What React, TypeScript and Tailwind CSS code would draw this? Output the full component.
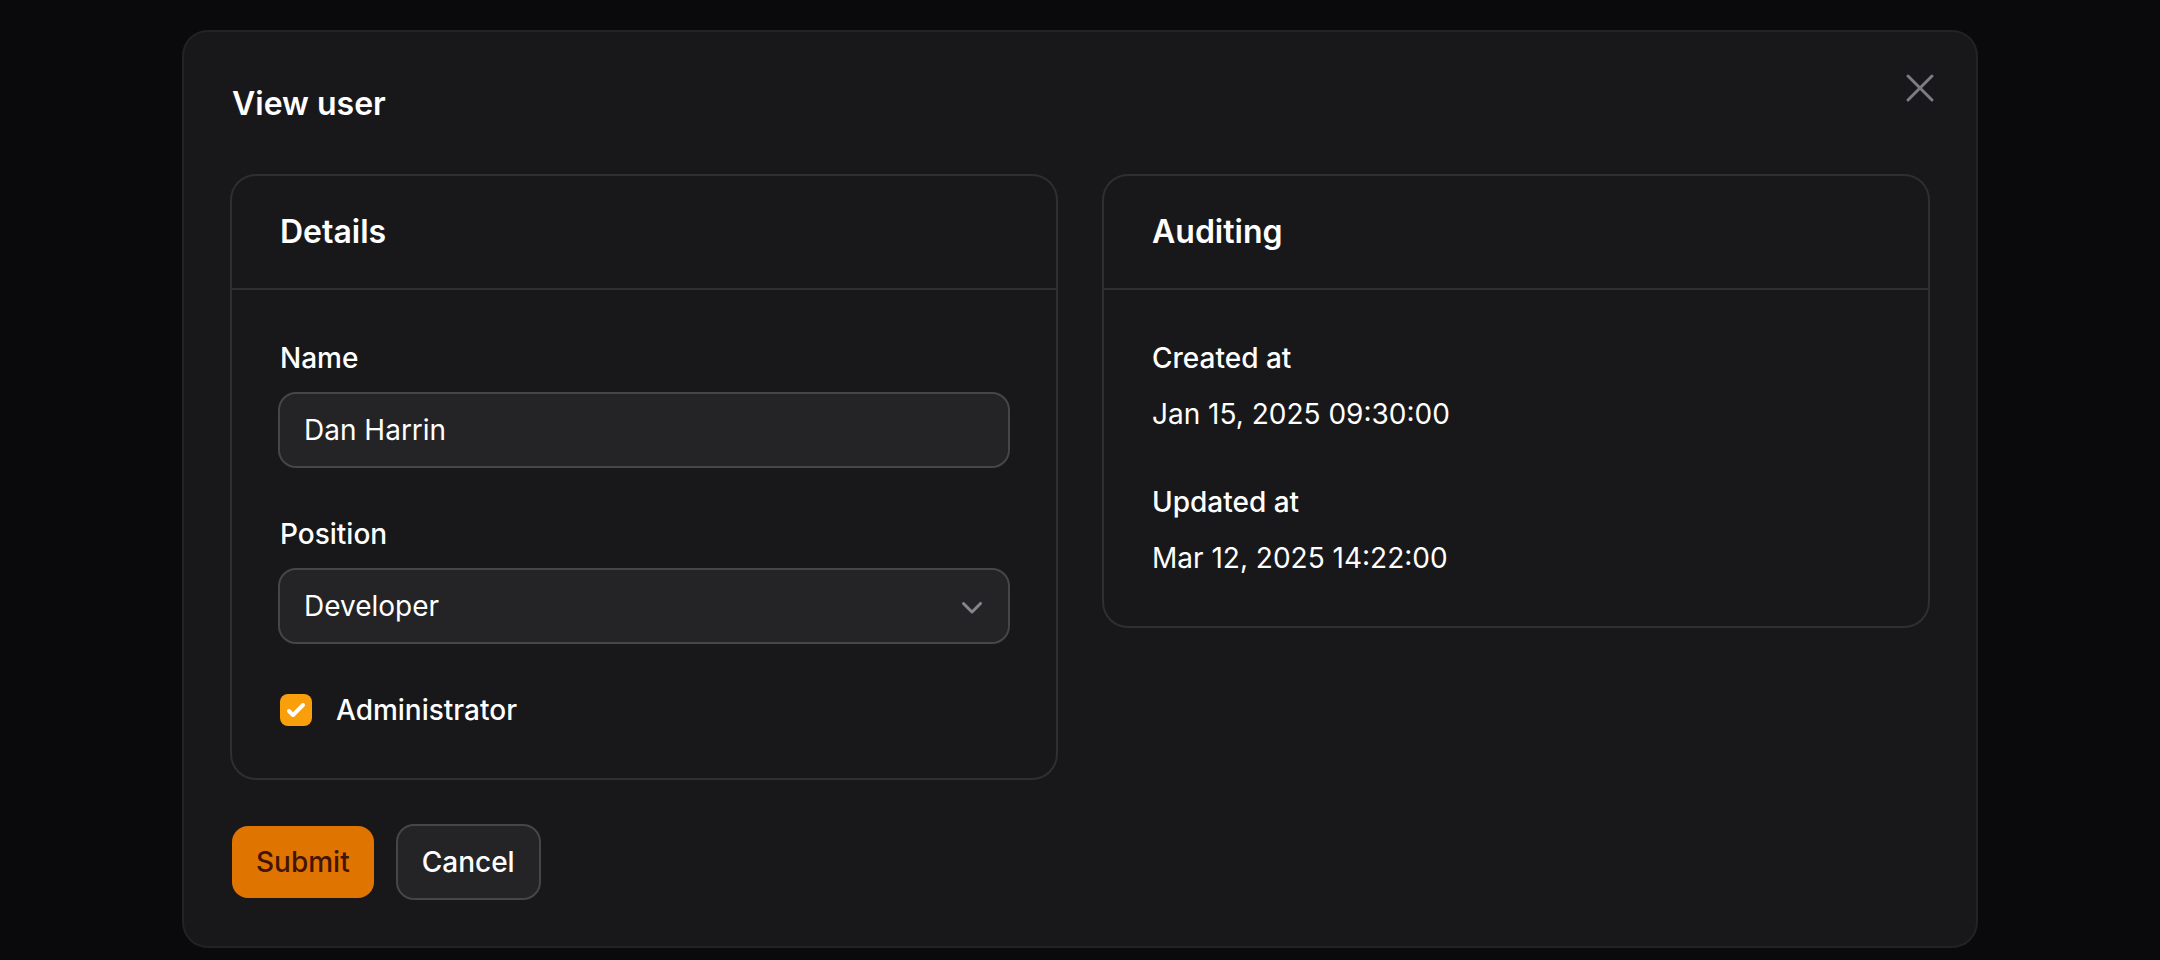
import React from "react";

function Section({ title, children }: { title: string; children: React.ReactNode }) {
  return (
    <div className="rounded-xl bg-[#18181b] ring-1 ring-white/10">
      <div className="px-6 py-4">
        <h3 className="text-base font-semibold leading-6 text-white">{title}</h3>
      </div>
      <div className="border-t border-white/10 p-6">{children}</div>
    </div>
  );
}

function Field({ label, children }: { label: string; children: React.ReactNode }) {
  return (
    <div className="flex flex-col gap-2">
      <label className="text-sm font-medium leading-5 text-white">{label}</label>
      {children}
    </div>
  );
}

function Entry({ label, value }: { label: string; value: string }) {
  return (
    <div className="flex flex-col gap-2">
      <div className="text-sm font-medium leading-5 text-white">{label}</div>
      <div className="text-sm leading-5 text-white">{value}</div>
    </div>
  );
}

export default function App() {
  return (
    <div className="min-h-screen bg-[#0a0a0c] font-['Inter',sans-serif] antialiased">
      <div className="[zoom:2] pt-4">
        <div className="relative mx-auto w-[896px] rounded-xl bg-[#18181b] ring-1 ring-white/10">
          <button className="absolute right-4 top-[16px] text-[#7c7c82]" aria-label="Close">
            <svg viewBox="0 0 24 24" className="h-6 w-6" fill="none" stroke="currentColor" strokeWidth={1.5}>
              <path strokeLinecap="round" strokeLinejoin="round" d="M6 18 18 6M6 6l12 12" />
            </svg>
          </button>

          <div className="px-6 pt-6">
            <h2 className="text-base font-semibold leading-6 text-white">View user</h2>
          </div>

          <div className="grid grid-cols-2 items-start gap-6 p-6">
            <Section title="Details">
              <div className="flex flex-col gap-6">
                <Field label="Name">
                  <div className="flex h-9 items-center rounded-lg bg-white/5 px-3 text-sm text-white ring-1 ring-white/20">
                    Dan Harrin
                  </div>
                </Field>
                <Field label="Position">
                  <div className="flex h-9 items-center justify-between rounded-lg bg-white/5 pl-3 pr-2 text-sm text-white ring-1 ring-white/20">
                    <span>Developer</span>
                    <svg viewBox="0 0 20 20" className="h-5 w-5 text-[#85858c]" fill="currentColor">
                      <path
                        fillRule="evenodd"
                        d="M5.22 8.22a.75.75 0 0 1 1.06 0L10 11.94l3.72-3.72a.75.75 0 1 1 1.06 1.06l-4.25 4.25a.75.75 0 0 1-1.06 0L5.22 9.28a.75.75 0 0 1 0-1.06Z"
                        clipRule="evenodd"
                      />
                    </svg>
                  </div>
                </Field>
                <div className="flex items-center gap-3">
                  <div className="flex h-4 w-4 items-center justify-center rounded bg-[#fa9f0c]">
                    <svg viewBox="0 0 16 16" className="h-4 w-4" fill="white">
                      <path d="M12.207 4.793a1 1 0 010 1.414l-5 5a1 1 0 01-1.414 0l-2-2a1 1 0 011.414-1.414L6.5 9.086l4.293-4.293a1 1 0 011.414 0z" />
                    </svg>
                  </div>
                  <span className="text-sm font-medium leading-5 text-white">Administrator</span>
                </div>
              </div>
            </Section>

            <Section title="Auditing">
              <div className="flex flex-col gap-6">
                <Entry label="Created at" value="Jan 15, 2025 09:30:00" />
                <Entry label="Updated at" value="Mar 12, 2025 14:22:00" />
              </div>
            </Section>
          </div>

          <div className="flex gap-3 px-6 pb-6">
            <button className="rounded-lg bg-[#e07400] px-3 py-2 text-sm font-medium leading-5 text-[#431407]">
              Submit
            </button>
            <button className="rounded-lg bg-white/5 px-3 py-2 text-sm font-medium leading-5 text-white ring-1 ring-white/20">
              Cancel
            </button>
          </div>
        </div>
      </div>
    </div>
  );
}
